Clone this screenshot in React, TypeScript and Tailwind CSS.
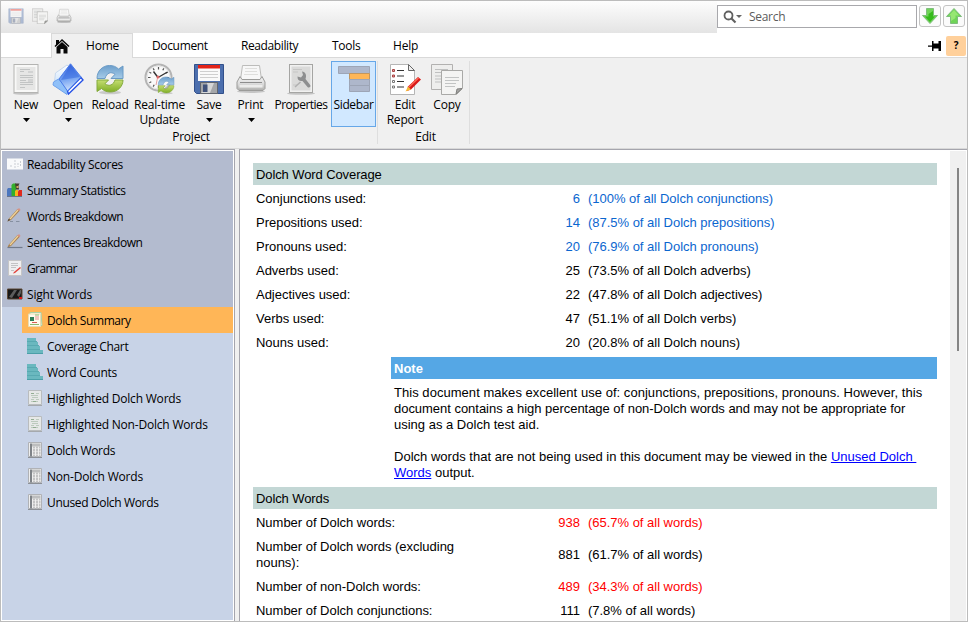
import type { ReactNode } from "react";

function DocPage({ size = 32 }: { size?: number }) {
  return (
    <svg className="shrink-0" width={size} height={size} viewBox="0 0 32 32">
      <ellipse cx="16" cy="30.500" rx="13" ry="1.300" fill="#c4c4c4" />
      <rect x="4" y="1.500" width="24" height="28" fill="#f8f8f7" stroke="#b4b4b2" />
      <rect x="6.500" y="4" width="19" height="23" fill="#e6e6e5" />
      <path d="M10 6.500h10M10 8.500h4M10 12.500h13M10 14.500h13M10 17.500h6M10 19.500h13M10 21.500h13M10 24.500h5" stroke="#c2c4c4" />
      <path d="M18 8h5v2h-5zM18 16h5v3h-5z" fill="#d2d3d3" />
    </svg>
  );
}

function OpenIcon() {
  return (
    <svg className="shrink-0" width="32" height="32" viewBox="0 0 32 32">
      <defs>
        <linearGradient id="bookCover" x1=".4" y1="0" x2=".55" y2="1">
          <stop offset="0" stopColor="#3b66dd" />
          <stop offset=".5" stopColor="#6d9df0" />
          <stop offset="1" stopColor="#d5e6fd" />
        </linearGradient>
        <linearGradient id="bookBack" x1="0" y1="0" x2="0" y2="1">
          <stop offset="0" stopColor="#fdfeff" />
          <stop offset="1" stopColor="#c4defb" />
        </linearGradient>
      </defs>
      <path d="M3.500 10 15 2l4 3L10 25l-8-2z" fill="url(#bookBack)" stroke="#c6d8ee" />
      <path d="m1.500 19 5-3L16 27l-1 4.500L1 22z" fill="#8fc0f8" stroke="#6fa2ec" />
      <path d="m15.500 28 13.500-13.500 2 2.500-14.500 14z" fill="#fff" stroke="#2450e6" strokeWidth="1.400" />
      <path d="M18.500.800 29 14 15.500 28 7 16z" fill="url(#bookCover)" stroke="#4a7be8" />
      <path d="M18.500 2 28 14 9 17z" fill="#2c5fdc" opacity=".45" />
    </svg>
  );
}

function ReloadIcon({ size = 32 }: { size?: number }) {
  return (
    <svg className="shrink-0" width={size} height={size} viewBox="0 0 32 32">
      <defs>
        <linearGradient id="arrowBlue" x1="0" y1="0" x2="0" y2="1">
          <stop offset="0" stopColor="#6c9ecb" />
          <stop offset="1" stopColor="#a5cbe8" />
        </linearGradient>
        <linearGradient id="arrowGreen" x1="0" y1="0" x2="0" y2="1">
          <stop offset="0" stopColor="#c5de72" />
          <stop offset="1" stopColor="#7fae26" />
        </linearGradient>
      </defs>
      <ellipse cx="16" cy="29.500" rx="11" ry="1.800" fill="#c9c9c9" />
      <path d="M3 15.500C3 7.500 9 2.500 15.500 2.500c4 0 6.500 1.200 9 3.500l4.500-3v12.500H17l4-4.200C17 8 12.500 10 11 15.500z" fill="url(#arrowBlue)" stroke="#6b9bc6" />
      <path d="M29 17c0 7-6 12-12.500 12-4 0-6.500-1.200-9-3.500l-4.500 3V17h11.500l-3.500 3.700c4 3.300 8.500 1.300 10-3.700z" fill="url(#arrowGreen)" stroke="#84ab3e" />
    </svg>
  );
}

function ClockIcon() {
  return (
    <svg className="shrink-0" width="32" height="32" viewBox="0 0 32 32">
      <circle cx="14.500" cy="14.500" r="13" fill="#fafafa" stroke="#b4b4b4" strokeWidth="2" />
      <circle cx="14.500" cy="14.500" r="11.500" fill="none" stroke="#e4e4e4" />
      <path d="M14.500 4v2.500M14.500 22.500v2.500M4 14.500h2.500M22.500 14.500H25M9.200 5.400l1 1.900M19.800 5.400l-1 1.900M5.400 9.200l1.900 1M23.600 9.200l-1.900 1M5.400 19.800l1.900-1M9.200 23.600l1-1.900" stroke="#555" strokeWidth="1.200" />
      <path d="M14 14.500 23.500 9M14 14.500 9.500 8.500" stroke="#333" strokeWidth="1.400" />
      <path d="m13.500 15-1.500 7" stroke="#e4a0a0" />
      <circle cx="14" cy="14" r="1.500" fill="#d66" />
      <g transform="translate(12.500 12.500) scale(.6)">
        <ReloadIcon />
      </g>
    </svg>
  );
}

function FloppyIcon({ size = 32 }: { size?: number }) {
  return (
    <svg className="shrink-0" width={size} height={size} viewBox="0 0 32 32">
      <path d="M1.500 1.500h29v29h-27l-2-2z" fill="#4c6fae" stroke="#32508b" />
      <rect x="5" y="2" width="22" height="16" fill="#fafafa" />
      <rect x="5" y="2" width="22" height="3.500" fill="#e32318" />
      <path d="M7 8.500h18M7 11.500h18M7 14.500h18" stroke="#cfcfcf" />
      <rect x="7.500" y="19.500" width="17" height="11" fill="#a4a6a9" stroke="#60656e" />
      <path d="M14 20h7l-4 10H8.500v-1H14z" fill="#d5d6d7" />
      <rect x="10" y="21.500" width="4.500" height="7.500" fill="#40527a" />
    </svg>
  );
}

function PrinterIcon({ size = 32 }: { size?: number }) {
  return (
    <svg className="shrink-0" width={size} height={size} viewBox="0 0 32 32">
      <defs>
        <linearGradient id="printerBody" x1="0" y1="0" x2="0" y2="1">
          <stop offset="0" stopColor="#f4f4f4" />
          <stop offset=".55" stopColor="#dadada" />
          <stop offset="1" stopColor="#adadab" />
        </linearGradient>
      </defs>
      <ellipse cx="16" cy="28.500" rx="14" ry="1.500" fill="#c5c5c5" />
      <path d="M7.500 2.500h17l2 14h-21z" fill="#f7f7f7" stroke="#bcbcba" />
      <path d="M10 5.500h12M10 8.500h12M9 11.500h14" stroke="#dededc" />
      <path d="m5 13.500-3 5.500v6.500l2 2h24l2-2V19l-3-5.500-2 3H7z" fill="url(#printerBody)" stroke="#9b9b99" />
      <path d="M5 19.500h22" stroke="#8d8d8d" />
      <path d="M4.500 22h23v2.500h-23z" fill="#ececeb" />
    </svg>
  );
}

function PropertiesIcon() {
  return (
    <svg className="shrink-0" width="32" height="32" viewBox="0 0 32 32">
      <ellipse cx="16" cy="30.500" rx="14" ry="1.300" fill="#c4c4c4" />
      <rect x="4.500" y="1.500" width="23" height="28" fill="#f1f1f0" stroke="#a5a5a3" />
      <rect x="6.500" y="3.500" width="19" height="24" fill="#dadad9" />
      <path d="M8 6.500h9M8 9h5M8 22h4" stroke="#c6c6c5" />
      <path d="m17 8.500 1 3.500-2 2.500-3.500-1c-.2 3.500 2 5 5 4.500l5 6c1.500 1.500 4-.5 2.500-2.300L20.500 16C22 12 20.500 9 17 8.500z" fill="#8d8e8f" />
      <path d="m15.500 19-5.500 5" stroke="#b0b0b0" strokeWidth="1.500" />
    </svg>
  );
}

function SidebarIcon() {
  return (
    <svg className="shrink-0" width="32" height="32" viewBox="0 0 32 32">
      <path d="M.5 3.500h31v7H.5z" fill="#aeb7cb" stroke="#9da5b6" />
      <path d="M11.500 10.500h20v6h-20z" fill="#ffb657" stroke="#c2965f" />
      <path d="M11.500 16.500h20v6h-20zM11.500 22.500h20v6h-20z" fill="#aeb7cb" stroke="#9da5b6" />
    </svg>
  );
}

function EditReportIcon() {
  return (
    <svg className="shrink-0" width="32" height="32" viewBox="0 0 32 32">
      <path d="M1.500 1.500h18l6 6v24h-24z" fill="#fff" stroke="#b5b5b5" />
      <path d="M19.500 1.500v6h6z" fill="#efefef" stroke="#666" />
      <path d="M3.500 6.500h2v2h-2zM3.500 12h2v2h-2z" fill="#e49a9a" stroke="#a94444" />
      <path d="M3.500 17.500h2v2h-2zM3.500 23h2v2h-2z" fill="#fff" stroke="#777" />
      <path d="M8 7.500h7M8 13h7M8 18.500h7M8 24h7" stroke="#333" strokeWidth="1.200" />
      <path d="m19 23.500 10-9.500 3 2.500-10 10-4 1.500z" fill="#d91919" />
      <path d="m20 24 9.500-9" stroke="#ff6a55" strokeWidth="1.300" />
      <path d="m19 23.500 3 3-5.500 2z" fill="#f5bb38" />
    </svg>
  );
}

function CopyIcon({ size = 32 }: { size?: number }) {
  return (
    <svg className="shrink-0" width={size} height={size} viewBox="0 0 32 32">
      <path d="M.500 1.500h21v25H.500z" fill="#eeeeed" stroke="#b2b1b0" />
      <path d="M4 6.500h13M4 9.500h13M4 13h6M4 16h6M4 19h6" stroke="#bfc0c0" />
      <path d="M10.500 7.500h21v18l-6 6h-15z" fill="#f4f4f3" stroke="#a9a9a7" />
      <path d="M14 14.500h14M14 17.500h14M14 20.500h11M14 23.500h10" stroke="#c2c4c4" />
      <path d="m25 31 1-5 5-.5z" fill="#a5a5a4" stroke="#81817f" />
    </svg>
  );
}

function HomeIcon() {
  return (
    <svg width="16" height="16" viewBox="0 0 16 16">
      <path d="M2 2h3v2L8 1l7.500 7-1 1L8 3 1.500 9l-1-1L2 6.500z" fill="#080808" />
      <path d="M8 4 13.500 9v6.500h-4V11h-3v4.500h-4V9z" fill="#080808" />
    </svg>
  );
}

function SideIcon({ kind }: { kind: string }) {
  const shapes: Record<string, ReactNode> = {
    scores: (
      <>
        <path d="M0 2.500h16v11H0z" fill="#f9fafb" />
        <path d="M8 4v9M11 7v4M4 9v2M13.500 5v5" stroke="#c9cdd3" strokeDasharray="2 1" />
      </>
    ),
    stats: (
      <>
        <path d="M0 7.500 1 6h4v8H0z" fill="#4b76be" />
        <path d="M4.500 3 6 1.500h3V14H4.500z" fill="#32b02c" />
        <path d="m8 9 1-1h2v6H8z" fill="#f6b41c" />
        <path d="m11 9.500 1-1.500h3v6h-4z" fill="#df2a1e" />
        <path d="M8 1.500h4.500l-1 2 .5 4H9z" fill="#45402c" />
        <path d="M9.500 4h2v2h-2z" fill="#d1a35f" />
        <path d="M0 14h15v1H0z" fill="#68738c" />
      </>
    ),
    pencil: (
      <>
        <path d="m1.500 11 8.500-9.500q2-1 3 1L4 12 .500 13.500z" fill="#a98250" />
        <path d="m3 11 8-9" stroke="#efd39b" strokeWidth="1.300" />
        <path d="m10 1.800 1-1.200h1.800L13.500 2l-1 1z" fill="#d59386" />
        <path d="m.500 13.500 1-2.500 2 .8z" fill="#574d42" />
        <path d="M3 13.500h3M9 13.500h3.500" stroke="#8690a1" />
      </>
    ),
    sentence: (
      <>
        <path d="m1.500 11 8.500-9.500q2-1 3 1L4 12 .500 13.500z" fill="#a98250" />
        <path d="m3 11 8-9" stroke="#efd39b" strokeWidth="1.300" />
        <path d="m10 1.800 1-1.200h1.800L13.500 2l-1 1z" fill="#d59386" />
        <path d="M.500 13.500h15" stroke="#717a8c" strokeWidth="1.200" />
      </>
    ),
    grammar: (
      <>
        <path d="M1.500.500h13v15h-13z" fill="#efeff0" stroke="#c5c5c6" />
        <path d="M4 3.500h7M4 5.500h7M4 7.500h5M4 10.500h3" stroke="#c3c3c4" />
        <path d="m7 12 6-5 1 1-6 5-2 .5z" fill="#e1443d" />
      </>
    ),
    sight: (
      <>
        <path d="M.500 3h14.500v10H.500z" fill="#171717" stroke="#5d4937" />
        <path d="m2 11 5-7h3l-5 8zM10 9l3-5h1v3l-2 4z" fill="#5c5c5c" />
        <path d="M12 11h3v2h-3z" fill="#d61919" />
      </>
    ),
    summary: (
      <>
        <path d="M3 .500h11l1 13-12 1z" fill="#fff8e8" stroke="#a8d1a7" />
        <path d="M1.500 2h12v12.500h-12z" fill="#fffbed" stroke="#e8dcb4" />
        <path d="M3 5h4v4H3z" fill="#2d7e56" />
        <path d="M8 4h4v4H8z" fill="#f0c5bc" />
        <path d="M5 10.500h5" stroke="#d85d56" />
        <path d="M3 12.500h9M8 3h4" stroke="#8dba70" />
      </>
    ),
    bars: (
      <>
        <path d="M0 0h9v3H0zM0 4h11v3H0zM0 8h13v3H0zM0 12h16v3.500H0z" fill="#6ab8bf" />
        <path d="M0 3.500h9M0 7.500h12M0 11.500h13M0 15.500h16" stroke="#4b9fa8" />
        <path d="M0 3h10v1H0zM0 7h12v1H0zM0 11h13v1H0z" fill="#58a9b1" />
      </>
    ),
    notes: (
      <>
        <path d="M1.500.500h13v14h-13z" fill="#e6e8e7" stroke="#b9bcbe" />
        <path d="M4 3.500h3M9 3.500h3M4 5.500h7M5 7.500h6M4 9.500h3M9 9.500h3M4 11.500h7" stroke="#bccabd" />
        <path d="M6 11h3v1H6zM4 3h3v1H4z" fill="#93ad93" />
        <path d="M1 15.500h14" stroke="#a5a9ad" />
      </>
    ),
    grid: (
      <>
        <path d="M1.500.500h13v14h-13z" fill="#eeeeee" stroke="#b0b2b6" />
        <path d="M3 1.500h2v13H3z" fill="#7f8388" />
        <path d="M5 1.500h8.500v3H5z" fill="#bdbebf" />
        <path d="M6 4.500h2v10H6zM9 4.500h2v10H9zM12 4.500h1.500v10H12z" fill="#c3c3c4" />
        <path d="M5 6.500h9M5 9.500h9M5 12.500h9" stroke="#f0f0f0" strokeWidth=".5" />
        <path d="M1 15.500h14" stroke="#8c9096" />
      </>
    ),
  };
  return (
    <svg className="shrink-0" width="16" height="16" viewBox="0 0 16 16">
      {shapes[kind]}
    </svg>
  );
}

function ArrowButton({ up = false }: { up?: boolean }) {
  return (
    <span className="flex size-[22px] items-center justify-center rounded-[3px] border border-[#c4c4c4] bg-[#fbfbfb]">
      <svg className={up ? "" : "rotate-180"} width="18" height="18" viewBox="0 0 18 18">
        <path d="M9 1.500 16.500 9.500H12.500v7h-7v-7h-4z" fill="#6fd457" stroke="#7fbd7c" />
        <path d="M9 3 14 8.500h-3.500V11l-4.500 3V8.500H4z" fill={up ? "#96e673" : "#36bb1c"} />
      </svg>
    </span>
  );
}

function Caret() {
  return (
    <svg className="mt-[6px] ml-px shrink-0" width="7" height="4" viewBox="0 0 7 4">
      <path d="M0 0h7L3.500 4z" fill="#000" />
    </svg>
  );
}

type ToolProps = { icon: ReactNode; label: ReactNode; caret?: boolean; width: string; active?: boolean };

function Tool({ icon, label, caret, width, active }: ToolProps) {
  return (
    <div className={`flex h-[66px] flex-col items-center whitespace-nowrap border pt-px ${width} ${active ? "border-[#66a7e8] bg-[#d1e8ff]" : "border-transparent"}`}>
      {icon}
      <span className="mt-0.5 shrink-0 text-center leading-[15px]">{label}</span>
      {caret && <Caret />}
    </div>
  );
}

const sections = [
  ["scores", "Readability Scores", "tracking-[-0.31px]"],
  ["stats", "Summary Statistics", "tracking-[-0.42px]"],
  ["pencil", "Words Breakdown", "tracking-[-0.45px]"],
  ["sentence", "Sentences Breakdown", "tracking-[-0.45px]"],
  ["grammar", "Grammar", "tracking-[-0.6px]"],
  ["sight", "Sight Words", ""],
];

const pages = [
  ["summary", "Dolch Summary", "tracking-[-0.4px]"],
  ["bars", "Coverage Chart", "tracking-[-0.35px]"],
  ["bars", "Word Counts", "tracking-[-0.3px]"],
  ["notes", "Highlighted Dolch Words", ""],
  ["notes", "Highlighted Non-Dolch Words", ""],
  ["grid", "Dolch Words", "tracking-[-0.3px]"],
  ["grid", "Non-Dolch Words", ""],
  ["grid", "Unused Dolch Words", "tracking-[-0.35px]"],
];

const coverage = [
  ["Conjunctions used:", "6", "(100% of all Dolch conjunctions)", "text-[#0b66cf]"],
  ["Prepositions used:", "14", "(87.5% of all Dolch prepositions)", "text-[#0b66cf]"],
  ["Pronouns used:", "20", "(76.9% of all Dolch pronouns)", "text-[#0b66cf]"],
  ["Adverbs used:", "25", "(73.5% of all Dolch adverbs)", ""],
  ["Adjectives used:", "22", "(47.8% of all Dolch adjectives)", ""],
  ["Verbs used:", "47", "(51.1% of all Dolch verbs)", ""],
  ["Nouns used:", "20", "(20.8% of all Dolch nouns)", ""],
];

const words = [
  ["Number of Dolch words:", "938", "(65.7% of all words)", "text-[#ff0000]"],
  ["Number of Dolch words (excluding nouns):", "881", "(61.7% of all words)", ""],
  ["Number of non-Dolch words:", "489", "(34.3% of all words)", "text-[#ff0000]"],
  ["Number of Dolch conjunctions:", "111", "(7.8% of all words)", ""],
];

function StatRows({ rows }: { rows: string[][] }) {
  return (
    <div className="flex flex-col gap-0.5 pt-0.5 tracking-[-0.02px]">
      {rows.map(([label, value, note, tone]) => (
        <div key={label} className="flex items-center pt-1 pb-0.5 pl-[3px]">
          <span className="w-[220px] pr-3">{label}</span>
          <span className={`w-[104px] text-right ${tone}`}>{value}</span>
          <span className={`pl-2 ${tone}`}>{note}</span>
        </div>
      ))}
    </div>
  );
}

function Heading({ children }: { children: ReactNode }) {
  return <h2 className="h-[22px] bg-[#c3d7d5] pt-px pl-[3px] leading-[22px] tracking-[-0.1px]">{children}</h2>;
}

export default function App() {
  return (
    <div className="flex h-[622px] w-[968px] flex-col overflow-hidden border border-[#bcbcbc] bg-white font-['Open_Sans','Noto_Sans',sans-serif] text-xs tracking-[-0.2px] text-black">
      <header className="flex h-8 shrink-0">
        <div className="flex w-[716px] items-center gap-2 bg-linear-to-b from-[#fdfdfd] to-[#e4e4e4] pb-0.5 pl-[7px]">
          <span className="opacity-40"><FloppyIcon size={16} /></span>
          <CopyIcon size={16} />
          <PrinterIcon size={16} />
        </div>
        <div className="flex pt-1">
          <div className="flex h-[23px] w-[200px] items-center border border-[#a8a8ac] pl-[5px] text-[#5c5c5c]">
            <svg width="20" height="14" viewBox="0 0 20 14">
              <circle cx="5.500" cy="5.500" r="4" fill="none" stroke="#606060" strokeWidth="1.800" />
              <path d="m8.500 8.500 4 4" stroke="#606060" strokeWidth="2.200" />
              <path d="M13 5h6l-3 3z" fill="#666" />
            </svg>
            <span className="ml-1.5 tracking-[-0.3px]">Search</span>
          </div>
          <div className="flex gap-0.5 pl-0.5">
            <ArrowButton />
            <ArrowButton up />
          </div>
        </div>
      </header>

      <nav className="flex h-[25px] shrink-0 items-stretch">
        <div className="w-[50px] border-b border-[#d9d9d9]" />
        <div className="flex w-[82px] items-center border-x border-t border-[#d9d9d9] bg-[#f0f0f0] pl-0.5">
          <HomeIcon />
          <span className="ml-4">Home</span>
        </div>
        <div className="flex grow items-center border-b border-[#d9d9d9] pt-px pl-[19px]">
          <span className="w-[89px] tracking-[-0.35px]">Document</span>
          <span className="w-[91px] tracking-[-0.4px]">Readability</span>
          <span className="w-[61px] tracking-[-0.3px]">Tools</span>
          <span className="grow">Help</span>
          <svg className="mr-1" width="14" height="14" viewBox="0 0 14 14">
            <path d="M0 6.500h4v1.200H0zM4 2h1.500v2.500h5V2H13v10h-2.500V9.500h-5V12H4z" fill="#000" />
          </svg>
          <span className="mr-px flex h-5 w-5 items-center justify-center rounded-xs bg-[#ffd09b] text-[10px] font-bold">?</span>
        </div>
      </nav>

      <section className="flex h-[91px] shrink-0 border-b border-[#d9d9d9] bg-[#f0f0f0] pt-[3px] pb-1">
        <div className="flex w-[377px] flex-col border-r border-[#dedede] pl-1">
          <div className="flex">
            <Tool width="w-[42px]" icon={<DocPage />} label="New" caret />
            <Tool width="w-[42px]" icon={<OpenIcon />} label="Open" caret />
            <Tool width="w-[42px]" icon={<ReloadIcon />} label="Reload" />
            <Tool width="w-[57px]" icon={<ClockIcon />} label={<>Real-time<br />Update</>} />
            <Tool width="w-[42px]" icon={<FloppyIcon />} label="Save" caret />
            <Tool width="w-[41px]" icon={<PrinterIcon />} label="Print" caret />
            <div className="tracking-[-0.5px]">
              <Tool width="w-[60px]" icon={<PropertiesIcon />} label="Properties" />
            </div>
            <div className="tracking-[-0.4px]">
              <Tool width="w-[45px]" icon={<SidebarIcon />} label="Sidebar" active />
            </div>
          </div>
          <span className="h-[18px] pt-px text-center leading-[18px]">Project</span>
        </div>
        <div className="flex w-[92px] flex-col border-r border-[#dedede] pl-1.5">
          <div className="flex">
            <Tool width="w-[42px]" icon={<EditReportIcon />} label={<>Edit<br />Report</>} />
            <Tool width="w-[42px]" icon={<CopyIcon />} label="Copy" />
          </div>
          <span className="h-[18px] pt-px pr-0.5 text-center leading-[18px]">Edit</span>
        </div>
      </section>

      <div className="flex min-h-0 grow bg-[#f0f0f0]">
        <aside className="flex w-[234px] shrink-0 flex-col border-t border-r border-[#a5a5ad] bg-white p-px">
          <div className="bg-[#b3bbcf]">
            {sections.map(([kind, label, spacing]) => (
              <div key={label} className="flex h-[26px] items-center gap-1 pl-[5px]">
                <SideIcon kind={kind} />
                <span className={`pt-0.5 ${spacing}`}>{label}</span>
              </div>
            ))}
          </div>
          <div className="grow bg-[#c8d3e7] pl-5">
            {pages.map(([kind, label, spacing], index) => (
              <div key={label} className={`flex h-[26px] items-center gap-1 pl-[5px] ${index === 0 ? "bg-[#ffb657]" : ""}`}>
                <SideIcon kind={kind} />
                <span className={`whitespace-nowrap pt-0.5 ${spacing}`}>{label}</span>
              </div>
            ))}
          </div>
        </aside>

        <main className="ml-1 flex grow overflow-hidden border-t border-l border-[#a5a5ad] bg-white font-['Liberation_Sans',Arial,sans-serif] text-[13px] leading-4 tracking-normal">
          <article className="ml-[13px] mt-[13px] w-[684px] shrink-0">
            <Heading>Dolch Word Coverage</Heading>
            <StatRows rows={coverage} />
            <div className="mt-1 mb-1.5 ml-[138px]">
              <h3 className="h-[22px] bg-[#55a7e5] pt-px pl-[3px] font-bold leading-[22px] text-white">Note</h3>
              <div className="mt-[6px] whitespace-nowrap pl-[3px]">
                <p className="tracking-[0.04px]">This document makes excellent use of: conjunctions, prepositions, pronouns. However, this</p>
                <p className="tracking-[-0.03px]">document contains a high percentage of non-Dolch words and may not be appropriate for</p>
                <p>using as a Dolch test aid.</p>
                <p className="mt-4 tracking-[0.015px]">
                  Dolch words that are not being used in this document may be viewed in the{" "}
                  <a className="whitespace-pre text-[#0000ff] underline">Unused Dolch </a>
                </p>
                <p><a className="text-[#0000ff] underline">Words</a> output.</p>
              </div>
            </div>
            <Heading>Dolch Words</Heading>
            <StatRows rows={words} />
          </article>
          <div className="ml-[13px] mt-px flex w-4 shrink-0 justify-center bg-[#f0f0f0] pt-[17px]">
            <div className="h-[183px] w-0.5 bg-[#858585]" />
          </div>
        </main>
      </div>
    </div>
  );
}
